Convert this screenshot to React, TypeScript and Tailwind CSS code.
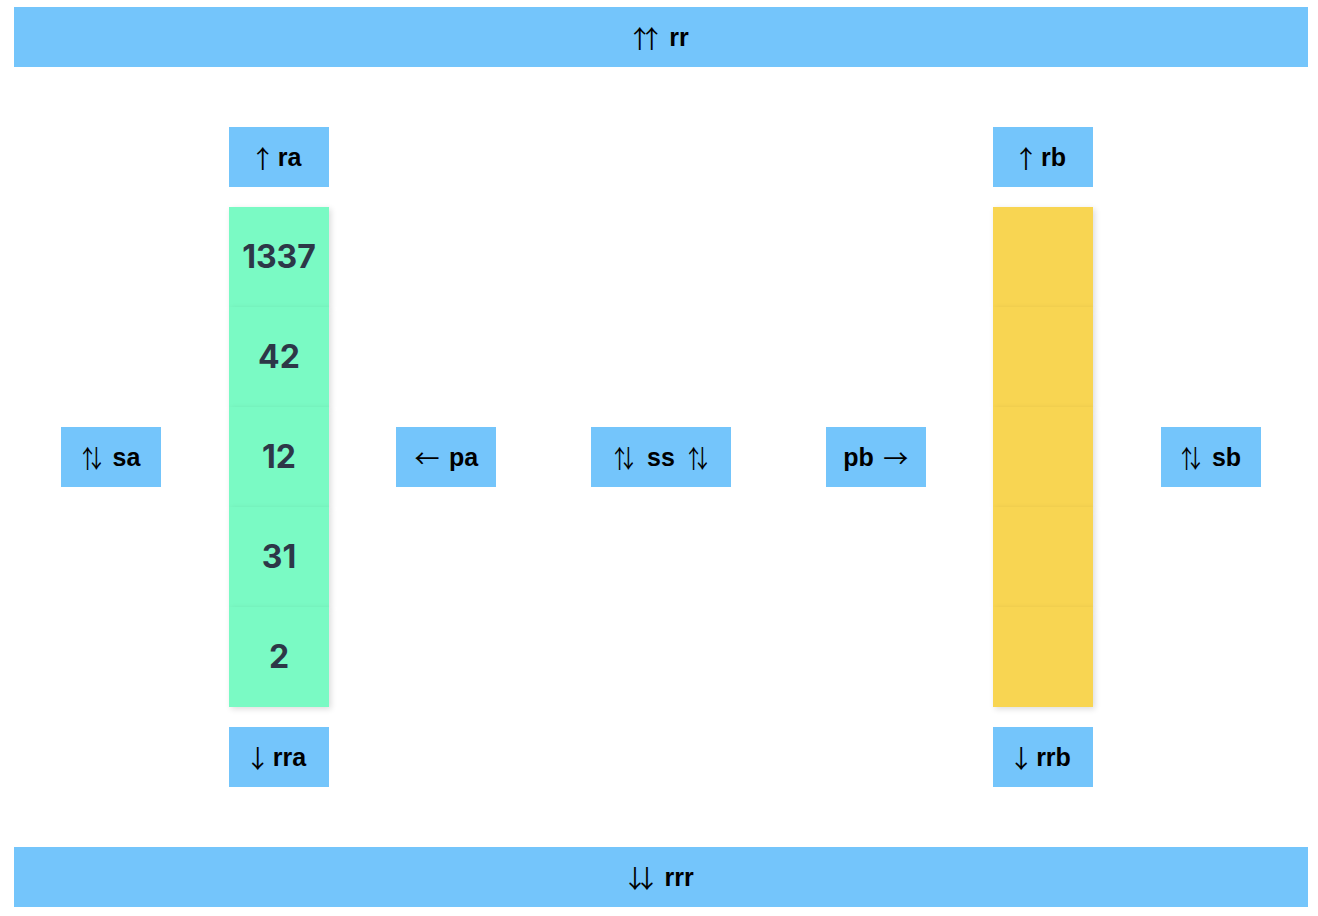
import React from "react";

const btn =
  "flex items-center justify-center gap-[9px] bg-[#74c5fb] text-black font-bold text-[25px] leading-none font-['Liberation_Sans',Arial,sans-serif] whitespace-pre";

const cjk = "font-normal font-['Noto_Sans_CJK_JP',sans-serif]";

function A({ c, w, extra = "" }: { c: string; w: string; extra?: string }) {
  return <span className={`inline-flex justify-center ${w} ${extra} ${cjk}`}>{c}</span>;
}

function Double({ c }: { c: string }) {
  return (
    <span className={`flex -translate-x-[6px] ${cjk}`}>
      <span className="tracking-[-13px]">{c}</span>
      <span className="tracking-[-13px]">{c}</span>
    </span>
  );
}

const Up = () => <A c="↑" w="w-[12px]" />;
const Down = () => <A c="↓" w="w-[12px]" />;
const Swap = () => <A c="⇅" w="w-[20px]" extra="scale-x-[0.8]" />;

function Btn({ children, w = "w-[100px]" }: { children: React.ReactNode; w?: string }) {
  return <div className={`${btn} ${w} h-[60px] shrink-0`}>{children}</div>;
}

function Stack({ values, color }: { values: (number | null)[]; color: string }) {
  return (
    <div className="flex flex-col w-[100px]">
      {values.map((v, i) => (
        <div
          key={i}
          className={`${color} h-[100px] flex items-center justify-center shadow-[2px_2px_6px_rgba(0,0,0,0.14)] text-[#2d3748] font-bold text-[32px] font-['Inter',sans-serif]`}
        >
          {v ?? ""}
        </div>
      ))}
    </div>
  );
}

export default function App() {
  return (
    <div className="w-[1318px] h-[916px] bg-white pt-[7px] pl-[14px] flex flex-col items-start">
      <div className={`${btn} w-[1294px] h-[60px] gap-[12px]`}>
        <Double c="↑" />
        <span>rr</span>
      </div>
      <div className="w-[1294px] flex items-center mt-[60px]">
        <div className="w-[47px] shrink-0" />
        <Btn w="w-[100px] gap-[11px]">
          <Swap />
          <span>sa</span>
        </Btn>
        <div className="w-[68px] shrink-0" />
        <div className="flex flex-col items-center gap-[20px]">
          <Btn>
            <Up />
            <span>ra</span>
          </Btn>
          <Stack values={[1337, 42, 12, 31, 2]} color="bg-[#7afac4]" />
          <Btn>
            <Down />
            <span>rra</span>
          </Btn>
        </div>
        <div className="w-[67px] shrink-0" />
        <Btn>
          <A c="←" w="w-[26px]" />
          <span>pa</span>
        </Btn>
        <div className="w-[95px] shrink-0" />
        <Btn w="w-[140px] gap-[13px]">
          <Swap />
          <span>ss</span>
          <Swap />
        </Btn>
        <div className="w-[95px] shrink-0" />
        <Btn>
          <span>pb</span>
          <A c="→" w="w-[26px]" />
        </Btn>
        <div className="w-[67px] shrink-0" />
        <div className="flex flex-col items-center gap-[20px]">
          <Btn>
            <Up />
            <span>rb</span>
          </Btn>
          <Stack values={[null, null, null, null, null]} color="bg-[#f8d552]" />
          <Btn>
            <Down />
            <span>rrb</span>
          </Btn>
        </div>
        <div className="w-[68px] shrink-0" />
        <Btn w="w-[100px] gap-[11px]">
          <Swap />
          <span>sb</span>
        </Btn>
      </div>
      <div className={`${btn} w-[1294px] h-[60px] mt-[60px] gap-[12px]`}>
        <Double c="↓" />
        <span>rrr</span>
      </div>
    </div>
  );
}
